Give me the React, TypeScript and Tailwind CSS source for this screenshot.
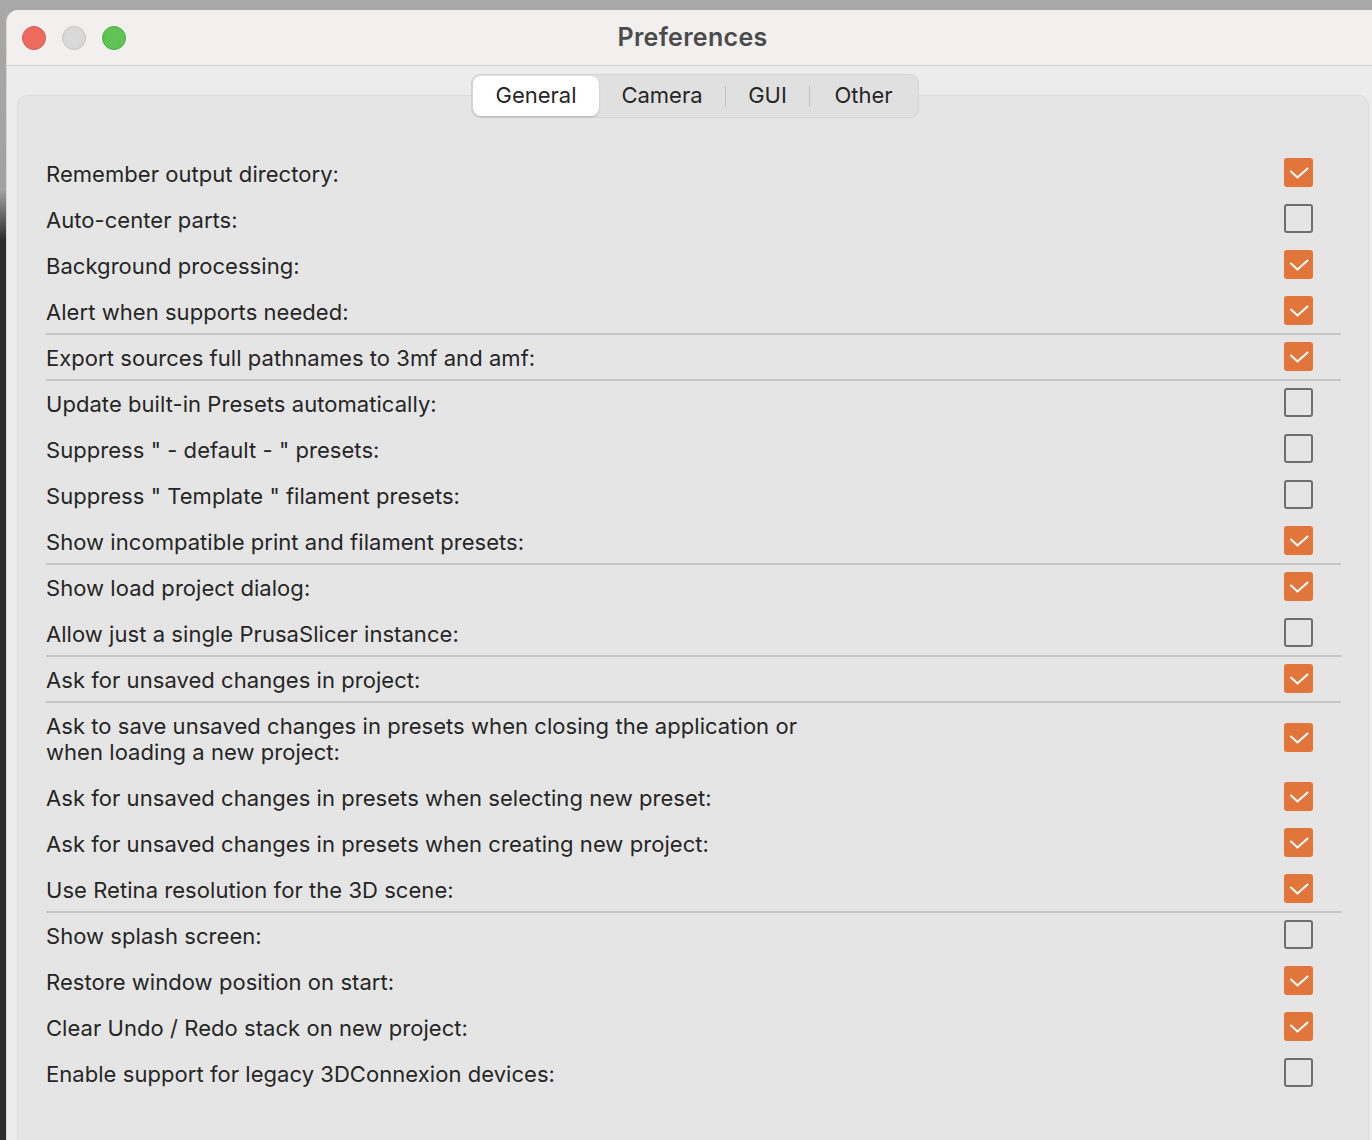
type Row = { label: string[]; checked: boolean; sepTop?: boolean };

const rows: Row[] = [
  { label: ['Remember output directory:'], checked: true },
  { label: ['Auto-center parts:'], checked: false },
  { label: ['Background processing:'], checked: true },
  { label: ['Alert when supports needed:'], checked: true },
  { label: ['Export sources full pathnames to 3mf and amf:'], checked: true, sepTop: true },
  { label: ['Update built-in Presets automatically:'], checked: false, sepTop: true },
  { label: ['Suppress " - default - " presets:'], checked: false },
  { label: ['Suppress " Template " filament presets:'], checked: false },
  { label: ['Show incompatible print and filament presets:'], checked: true },
  { label: ['Show load project dialog:'], checked: true, sepTop: true },
  { label: ['Allow just a single PrusaSlicer instance:'], checked: false },
  { label: ['Ask for unsaved changes in project:'], checked: true, sepTop: true },
  {
    label: [
      'Ask to save unsaved changes in presets when closing the application or',
      'when loading a new project:',
    ],
    checked: true,
    sepTop: true,
  },
  { label: ['Ask for unsaved changes in presets when selecting new preset:'], checked: true },
  { label: ['Ask for unsaved changes in presets when creating new project:'], checked: true },
  { label: ['Use Retina resolution for the 3D scene:'], checked: true },
  { label: ['Show splash screen:'], checked: false, sepTop: true },
  { label: ['Restore window position on start:'], checked: true },
  { label: ['Clear Undo / Redo stack on new project:'], checked: true },
  { label: ['Enable support for legacy 3DConnexion devices:'], checked: false },
];

const tabs = ['General', 'Camera', 'GUI', 'Other'];

function Checkbox({ checked }: { checked: boolean }) {
  if (checked) {
    return (
      <span className="flex h-[29px] w-[29px] items-center justify-center rounded-[3px] bg-[#e2763a]">
        <svg width="29" height="29" viewBox="0 0 29 29" fill="none">
          <path d="M7 13.5 L13.5 19.5 L23.5 10.5" stroke="#fff" strokeWidth="2" strokeLinecap="round" strokeLinejoin="round" />
        </svg>
      </span>
    );
  }
  return <span className="block h-[29px] w-[29px] rounded-[3px] border-2 border-[#6f6f6f]" />;
}

export default function App() {
  return (
    <div
      className="h-[1140px] w-[1372px] overflow-hidden bg-[linear-gradient(to_bottom,#a8a8a8_0px,#a2a2a2_190px,#2c2c2c_240px,#2c2c2c_100%)] pl-[6px] pt-[10px]"
      style={{ fontFamily: 'Inter, "Noto Sans", "Liberation Sans", sans-serif' }}
    >
      <div className="h-full w-[1380px] overflow-hidden rounded-tl-[12px] rounded-tr-[12px] border-l border-[#d6d6d6] bg-[#ececec]">
        {/* title bar */}
        <div className="relative flex h-[56px] items-center border-b border-[#d2d2d2] bg-[#f1f0ef]">
          <div className="flex items-center gap-[16px] pl-[15px]">
            <span className="h-[24px] w-[24px] rounded-full border border-[#d85b52] bg-[#ee6a5f]" />
            <span className="h-[24px] w-[24px] rounded-full border border-[#c4c4c4] bg-[#d9d9d9]" />
            <span className="h-[24px] w-[24px] rounded-full border border-[#4aae42] bg-[#5fc454]" />
          </div>
          <div className="absolute left-0 top-0 flex h-full w-[1372px] items-center justify-center pr-[1px] text-[25px] font-semibold tracking-[0.3px] text-[#4b4b4b]">
            Preferences
          </div>
        </div>

        {/* body */}
        <div className="relative pl-[10px] pr-[10px] pt-[29px]">
          {/* tabs */}
          <div className="absolute left-[464px] top-[8px] z-10 flex h-[44px] items-center rounded-[9px] border border-[#d4d4d4] bg-[#e1e0e0] p-[1px] text-[22px] text-[#262626]">
            {tabs.map((t, i) => (
              <div key={t} className="flex items-center">
                {i > 1 && <span className="h-[21px] w-[1px] bg-[#c3c3c3]" />}
                <div
                  className={
                    i === 0
                      ? 'flex h-[40px] w-[126px] items-center justify-center rounded-[8px] bg-white pb-[2px] shadow-[0_1px_2px_rgba(0,0,0,0.2)]'
                      : i === 1
                        ? 'flex h-[40px] w-[126px] items-center justify-center pb-[2px]'
                        : i === 2
                          ? 'flex h-[40px] w-[83px] items-center justify-center pb-[2px]'
                          : 'flex h-[40px] w-[107px] items-center justify-center pb-[2px]'
                  }
                >
                  {t}
                </div>
              </div>
            ))}
          </div>

          <div className="h-[1100px] w-[1352px] rounded-[10px] border border-[#dcdcdc] bg-[#e5e5e5] pl-[28px] pr-[27px] pt-[53px] text-[22px] text-[#262626]">
            {rows.map((r, i) => (
              <div
                key={i}
                className={
                  (r.sepTop ? 'border-[#c6c6c6] ' : 'border-transparent ') +
                  (r.label.length > 1 ? 'h-[72px] ' : 'h-[46px] ') +
                  'flex items-center justify-between border-t-2 leading-[26px]'
                }
              >
                <div className="pt-[2px] tracking-[0.05px]">
                  {r.label.map((l) => (
                    <div key={l}>{l}</div>
                  ))}
                </div>
                <div className="mb-[1px] mr-[28px]">
                  <Checkbox checked={r.checked} />
                </div>
              </div>
            ))}
          </div>
        </div>
      </div>
    </div>
  );
}
